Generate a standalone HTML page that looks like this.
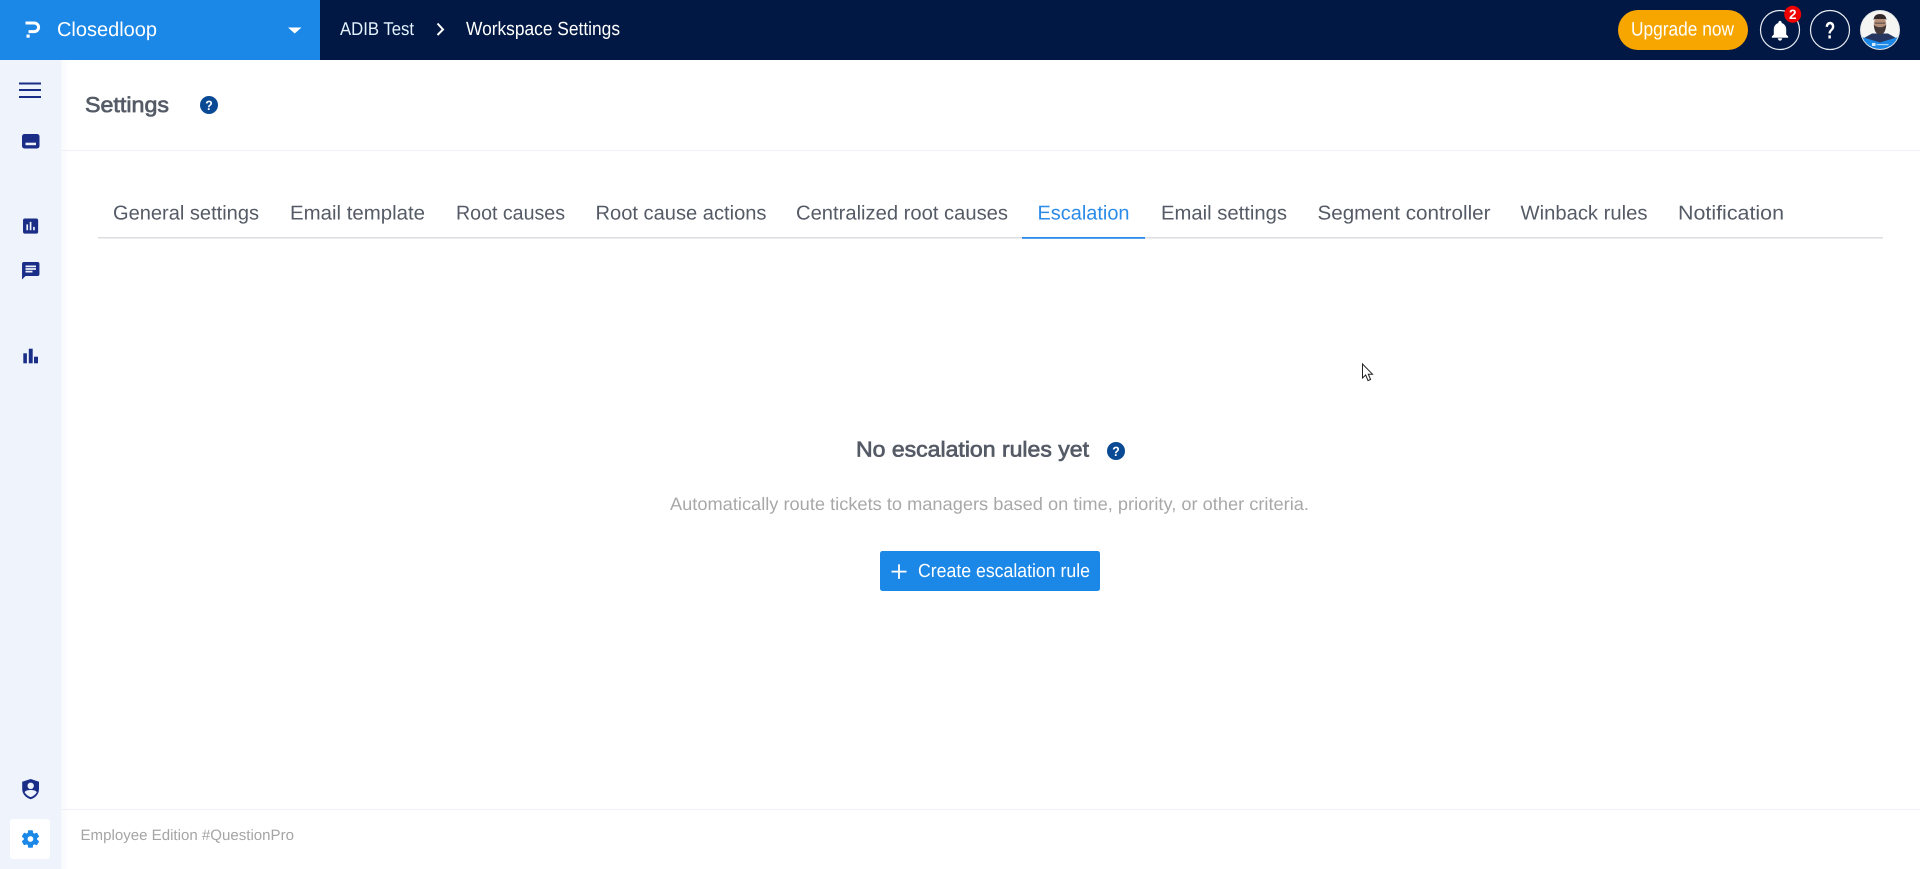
<!DOCTYPE html>
<html lang="en">
<head>
<meta charset="utf-8">
<title>Workspace Settings</title>
<style>
html,body{margin:0;padding:0;width:1920px;height:869px;overflow:hidden;background:#fff}
svg{display:block;position:absolute;left:0;top:0}
text{font-family:"Liberation Sans",sans-serif;text-rendering:geometricPrecision}
.tab{font-size:20px;fill:#555b66}
</style>
</head>
<body>
<svg width="1920" height="869" viewBox="0 0 1920 869" xmlns="http://www.w3.org/2000/svg">
<defs>
<linearGradient id="sh" x1="0" x2="1" y1="0" y2="0"><stop offset="0" stop-color="#f8f9fd"/><stop offset="1" stop-color="#ffffff"/></linearGradient>
</defs>
<rect width="1920" height="869" fill="#fff"/>

<!-- header -->
<rect x="0" y="0" width="1920" height="60" fill="#001843"/>
<rect x="0" y="0" width="320" height="60" fill="#1b87e6"/>
<path d="M25.5 23H34.3a4.3 4.3 0 0 1 0 8.6H28.5" fill="none" stroke="#fff" stroke-width="3"/>
<rect x="26.5" y="34.5" width="3.2" height="3.2" fill="#fff"/>
<text x="57" y="36" font-size="20" fill="#fff" textLength="100" lengthAdjust="spacingAndGlyphs">Closedloop</text>
<path d="M288 27.5H301.5L294.7 33.5Z" fill="#fff"/>
<text x="340" y="35" font-size="18.5" fill="#e4f3ff" textLength="74" lengthAdjust="spacingAndGlyphs">ADIB Test</text>
<path d="M437.5 23.5L443 29.5L437.5 35" fill="none" stroke="#fff" stroke-width="2"/>
<text x="466" y="35" font-size="19" fill="#fff" textLength="154" lengthAdjust="spacingAndGlyphs">Workspace Settings</text>

<rect x="1618" y="10" width="130" height="40" rx="20" fill="#f7a600"/>
<text x="1631" y="35.5" font-size="19.5" fill="#fff" textLength="103" lengthAdjust="spacingAndGlyphs">Upgrade now</text>

<circle cx="1780" cy="30" r="19.5" fill="none" stroke="#e8ebf1" stroke-width="1.2"/>
<g transform="translate(1768 18.5) scale(1)"><path fill="#fff" stroke="#fff" stroke-width=".4" d="M12 22c1.1 0 2-.9 2-2h-4c0 1.1.89 2 2 2zm6-6v-5c0-3.07-1.64-5.64-4.5-6.32V4c0-.83-.67-1.5-1.5-1.5s-1.5.67-1.5 1.5v.68C7.63 5.36 6 7.92 6 11v5l-2 2v1h16v-1l-2-2z"/></g>
<circle cx="1792.7" cy="14.3" r="8.5" fill="#f00000"/>
<text x="1792.7" y="19" font-size="13.5" font-weight="700" fill="#fff" text-anchor="middle">2</text>

<circle cx="1830" cy="30" r="19.5" fill="none" stroke="#e8ebf1" stroke-width="1.2"/>
<text x="1824.8" y="38.6" font-size="24" font-weight="700" fill="#fff" textLength="10.5" lengthAdjust="spacingAndGlyphs">?</text>

<!-- avatar -->
<clipPath id="av"><circle cx="1880" cy="30" r="19"/></clipPath>
<circle cx="1880" cy="30" r="20" fill="#e4e7ea"/>
<g clip-path="url(#av)">
<rect x="1860" y="10" width="40" height="40" fill="#f5f5f4"/>
<path d="M1864 38L1872 33.5H1888L1896 38V46H1864Z" fill="#263661"/>
<path d="M1860 36.5L1880 42.5L1900 36.5V50H1860Z" fill="#1b87e6"/>
<ellipse cx="1880" cy="24.5" rx="6.2" ry="8.5" fill="#b58f78"/>
<path d="M1873.5 20Q1874 14 1880 14Q1886 14 1886.5 20L1885 19H1875Z" fill="#33292a"/>
<path d="M1873.8 25Q1874.5 34.5 1880 34.5Q1885.5 34.5 1886.2 25Q1880 29.5 1873.8 25Z" fill="#43383a"/>
<rect x="1875" y="22.5" width="10" height="1.4" fill="#6a5a58"/>
<rect x="1872" y="43" width="3.5" height="3" fill="#d8ecfb"/>
<rect x="1876.5" y="44" width="12" height="1.2" fill="#a9d3f3"/>
</g>

<!-- sidebar -->
<rect x="61" y="60" width="9" height="809" fill="url(#sh)"/>
<rect x="0" y="60" width="61" height="809" fill="#eef3fc"/>
<rect x="19" y="82.5" width="22" height="2" fill="#1b2e87"/>
<rect x="19" y="89" width="22" height="2" fill="#1b2e87"/>
<rect x="19" y="96" width="22" height="2" fill="#1b2e87"/>

<rect x="22" y="134" width="17.5" height="14.5" rx="2.5" fill="#1b2e87"/>
<rect x="25.5" y="142.7" width="10.5" height="2.5" fill="#eef3fc"/>

<g transform="translate(20.5 216) scale(.84)"><path fill="#1b2e87" d="M19 3H5c-1.1 0-2 .9-2 2v14c0 1.1.9 2 2 2h14c1.1 0 2-.9 2-2V5c0-1.1-.9-2-2-2zM9 17H7v-7h2v7zm4 0h-2V7h2v10zm4 0h-2v-4h2v4z"/></g>
<g transform="translate(20.3 260.3) scale(.87)"><path fill="#1b2e87" d="M20 2H4c-1.1 0-1.99.9-1.99 2L2 22l4-4h14c1.1 0 2-.9 2-2V4c0-1.1-.9-2-2-2zM6 9h12v2H6V9zm8 5H6v-2h8v2zm4-6H6V6h12v2z"/></g>
<rect x="23.3" y="353.3" width="3.6" height="10" fill="#1b2e87"/>
<rect x="28.8" y="348.7" width="3.9" height="14.6" fill="#1b2e87"/>
<rect x="34" y="356.7" width="4" height="6.6" fill="#1b2e87"/>

<!-- shield -->
<path d="M30.7 779L39 781.8V789C39 794 35.5 797.9 30.7 799.3C25.9 797.9 22.2 794 22.2 789V781.8Z" fill="#1b2e87"/>
<circle cx="30.7" cy="785.8" r="3.2" fill="#eef3fc"/>
<path d="M24.6 792.2C26 790.3 28.3 790 30.7 790C33.1 790 35.4 790.3 36.8 792.2C35.5 794.6 33.2 796.2 30.7 797.1C28.2 796.2 25.9 794.6 24.6 792.2Z" fill="#eef3fc"/>

<rect x="10" y="819" width="40" height="40" rx="3" fill="#fff"/>
<g transform="translate(19.9 828.4) scale(.88)"><path fill="#1b87e6" stroke="#1b87e6" stroke-width=".7" d="M19.14 12.94c.04-.3.06-.61.06-.94 0-.32-.02-.64-.07-.94l2.03-1.58c.18-.14.23-.41.12-.61l-1.92-3.32c-.12-.22-.37-.29-.59-.22l-2.39.96c-.5-.38-1.03-.7-1.62-.94l-.36-2.54c-.04-.24-.24-.41-.48-.41h-3.84c-.24 0-.43.17-.47.41l-.36 2.54c-.59.24-1.13.57-1.62.94l-2.39-.96c-.22-.08-.47 0-.59.22L2.74 8.87c-.12.21-.08.47.12.61l2.03 1.58c-.05.3-.09.63-.09.94s.02.64.07.94l-2.03 1.58c-.18.14-.23.41-.12.61l1.92 3.32c.12.22.37.29.59.22l2.39-.96c.5.38 1.03.7 1.62.94l.36 2.54c.05.24.24.41.48.41h3.84c.24 0 .44-.17.47-.41l.36-2.54c.59-.24 1.13-.56 1.62-.94l2.39.96c.22.08.47 0 .59-.22l1.92-3.32c.12-.22.07-.47-.12-.61l-2.01-1.58zM12 15.6c-1.98 0-3.6-1.62-3.6-3.6s1.62-3.6 3.6-3.6 3.6 1.62 3.6 3.6-1.62 3.6-3.6 3.6z"/></g>

<!-- page title -->
<text x="85" y="112" font-size="21.5" fill="#555b66" stroke="#555b66" stroke-width=".7" textLength="84" lengthAdjust="spacingAndGlyphs">Settings</text>
<circle cx="209" cy="105" r="9" fill="#0a4a94"/>
<text x="205.2" y="110" font-size="13.5" font-weight="700" fill="#fff" textLength="7.5" lengthAdjust="spacingAndGlyphs">?</text>
<rect x="61" y="150" width="1859" height="1" fill="#eff1f6"/>

<!-- tabs -->
<text class="tab" x="113" y="219.5" textLength="146" lengthAdjust="spacingAndGlyphs">General settings</text>
<text class="tab" x="290" y="219.5" textLength="135" lengthAdjust="spacingAndGlyphs">Email template</text>
<text class="tab" x="456" y="219.5" textLength="109" lengthAdjust="spacingAndGlyphs">Root causes</text>
<text class="tab" x="595.5" y="219.5" textLength="171" lengthAdjust="spacingAndGlyphs">Root cause actions</text>
<text class="tab" x="796" y="219.5" textLength="212" lengthAdjust="spacingAndGlyphs">Centralized root causes</text>
<text class="tab" x="1037.5" y="219.5" textLength="92" lengthAdjust="spacingAndGlyphs" style="fill:#2b8be8">Escalation</text>
<text class="tab" x="1161" y="219.5" textLength="126" lengthAdjust="spacingAndGlyphs">Email settings</text>
<text class="tab" x="1317.5" y="219.5" textLength="173" lengthAdjust="spacingAndGlyphs">Segment controller</text>
<text class="tab" x="1520.5" y="219.5" textLength="127" lengthAdjust="spacingAndGlyphs">Winback rules</text>
<text class="tab" x="1678" y="219.5" textLength="106" lengthAdjust="spacingAndGlyphs">Notification</text>
<rect x="98" y="237" width="1785" height="1.5" fill="#dcdde0"/>
<rect x="1022" y="237" width="123" height="1.8" fill="#2b8be8"/>

<!-- cursor -->
<path d="M1362.5 364V378L1365.7 375L1368 380.6L1370.6 379.5L1368.3 374.2H1372.5Z" fill="#fff" stroke="#222" stroke-width="1"/>

<!-- empty state -->
<text x="856" y="456.5" font-size="21.5" fill="#555b66" stroke="#555b66" stroke-width=".7" textLength="233" lengthAdjust="spacingAndGlyphs">No escalation rules yet</text>
<circle cx="1116" cy="451" r="9" fill="#0a4a94"/>
<text x="1112.2" y="456" font-size="13.5" font-weight="700" fill="#fff" textLength="7.5" lengthAdjust="spacingAndGlyphs">?</text>
<text x="670" y="510" font-size="18" fill="#a8a8a8" textLength="639" lengthAdjust="spacingAndGlyphs">Automatically route tickets to managers based on time, priority, or other criteria.</text>

<rect x="880" y="551" width="220" height="40" rx="2.5" fill="#1b87e6"/>
<rect x="891.5" y="570.7" width="15" height="1.8" fill="#fff"/>
<rect x="898.1" y="564.3" width="1.8" height="14.6" fill="#fff"/>
<text x="918" y="577" font-size="19" fill="#fff" textLength="172" lengthAdjust="spacingAndGlyphs">Create escalation rule</text>

<!-- footer -->
<rect x="61" y="809" width="1859" height="1" fill="#eff1f6"/>
<text x="80.5" y="840" font-size="15" fill="#a5a5a5" textLength="213.5" lengthAdjust="spacingAndGlyphs">Employee Edition #QuestionPro</text>
</svg>
</body>
</html>
